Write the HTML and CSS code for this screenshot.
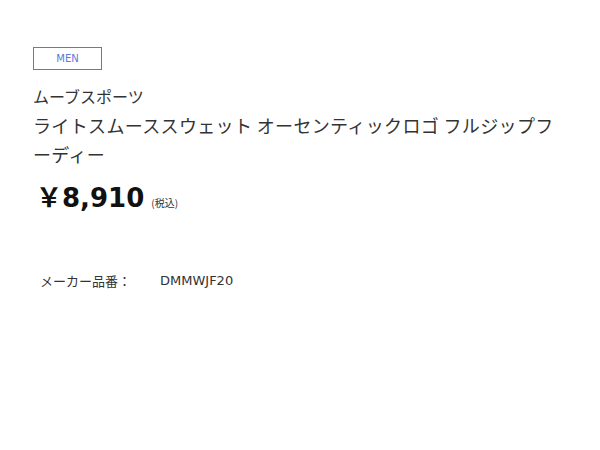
FILE: index.html
```html
<!DOCTYPE html>
<html lang="ja">
<head>
<meta charset="utf-8">
<link rel="stylesheet" href="styles.css">
</head>
<body>
<div class="product">
  <span class="tag">MEN</span>
  <p class="brand">ムーブスポーツ</p>
  <h1 class="title">ライトスムーススウェット オーセンティックロゴ フルジップフーディー</h1>
  <p class="price"><span class="yen">￥</span><span class="amount">8,910</span><span class="tax">(税込)</span></p>
  <dl class="spec">
    <dt>メーカー品番：</dt>
    <dd>DMMWJF20</dd>
  </dl>
</div>
</body>
</html>
```
FILE: styles.css
```css
html, body { margin: 0; padding: 0; background: #fff; }
body { font-family: "DejaVu Sans", "Noto Sans CJK JP", sans-serif; color: #333; }
.product { width: 525px; padding: 47px 0 0 33px; }
.tag {
  display: block; box-sizing: border-box; width: 69px; height: 23px;
  border: 1px solid #5a78d8; color: #5a78d8; font-size: 10px;
  text-align: center; line-height: 21px;
}
.brand { margin: 12px 0 0; font-family: "Noto Sans CJK JP", sans-serif; font-size: 16px; line-height: 28px; font-weight: 400; }
.title { margin: 1px 0 0; font-family: "Noto Sans CJK JP", sans-serif; font-size: 18px; line-height: 29px; font-weight: 400; letter-spacing: 0.35px; }
.price { margin: 9px 0 0 3px; display: flex; align-items: baseline; line-height: 36px; color: #111; }
.yen { font-family: "Noto Sans CJK JP", sans-serif; font-size: 26px; font-weight: 700; }
.amount { font-family: "DejaVu Sans", sans-serif; font-size: 26px; font-weight: 700; }
.tax { font-family: "Noto Sans CJK JP", sans-serif; font-size: 10px; margin-left: 7px; color: #333; }
.spec { margin: 50px 0 0 7px; display: flex; font-size: 13px; line-height: 20px; }
.spec dt { width: 120px; font-family: "Noto Sans CJK JP", sans-serif; }
.spec dd { margin: 0; }
```
